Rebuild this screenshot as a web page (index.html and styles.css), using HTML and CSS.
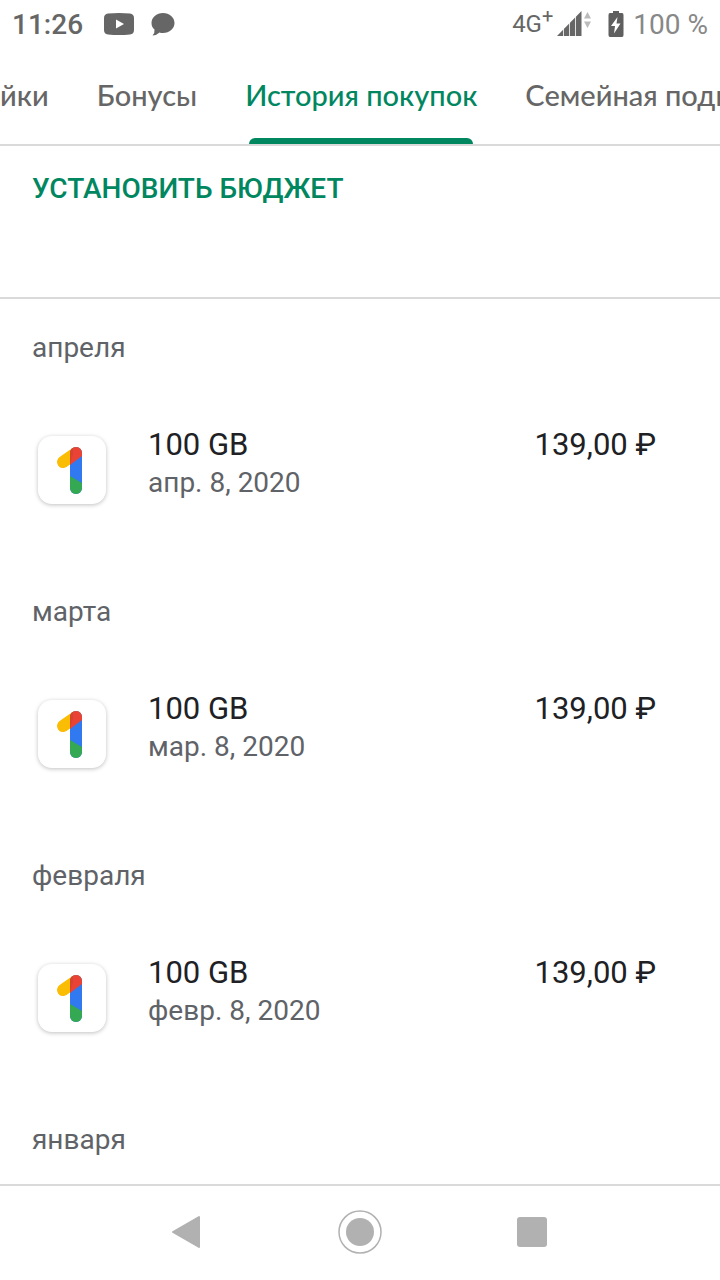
FILE: index.html
```html
<!DOCTYPE html>
<html lang="ru">
<head>
	<meta charset="utf-8">
	<title>История покупок</title>
	<meta name="viewport" content="width=device-width, initial-scale=1">
	<link rel="stylesheet" href="styles.css">
</head>
<body>
	<svg class="defs" width="0" height="0" aria-hidden="true">
		<defs>
			<clipPath id="stem"><rect x="32" y="11" width="12" height="47" rx="6"/></clipPath>
			<symbol id="one" viewBox="0 0 68 68">
				<path d="M25 26L38 17" fill="none" stroke="#fbbc04" stroke-width="12" stroke-linecap="round"/>
				<g clip-path="url(#stem)">
					<path d="M32 0H44V60H32z" fill="#3079f0"/>
					<path d="M32 0H44V20L32 29z" fill="#ea4335"/>
					<path d="M32 0H35V18L32 29z" fill="#d3452c"/>
					<path d="M32 40L44 47V60H32z" fill="#34a853"/>
				</g>
			</symbol>
		</defs>
	</svg>

	<header class="status">
		<span class="clock">11:26</span>
		<svg class="youtube" width="30" height="22" viewBox="0 0 30 22"><path fill="#666" fill-rule="evenodd" d="M4 .5Q15-.5 26 .5Q30 1 30 5V17Q30 21 26 21.500Q15 22.500 4 21.500Q0 21 0 17V5Q0 1 4 .5zM12 6.500V15.500L20 11z"/></svg>
		<svg class="chat" width="24" height="24" viewBox="0 0 24 24"><path fill="#666" d="M12 1C18.500 1 23.500 5.500 23.500 11S18.500 21 12 21Q10 21 8.500 20.500Q5.500 23.500 1.500 23.500Q4 21 3.500 17.500Q.5 15 .5 11C.5 5.500 5.500 1 12 1z"/></svg>
		<span class="network">4G<sup>+</sup></span>
		<svg class="signal" width="34" height="26" viewBox="0 0 34 26">
			<path fill="#666" d="M0 25L24.500 0V25z"/>
			<path stroke="#fff" stroke-width=".8" d="M6.500 10V25M12.500 8V25M18.500 4V25"/>
			<path fill="#bbb" d="M30.500 1L34 7.500H27zM27 10.500H34L30.500 17z"/>
		</svg>
		<svg class="battery" width="16" height="26" viewBox="0 0 16 26"><path fill="#5f5f5f" fill-rule="evenodd" d="M5 0H11V2H14Q15.500 2 15.500 4V24Q15.500 26 14 26H2Q.5 26 .5 24V4Q.5 2 2 2H5zM9.500 6L3 15H7L6 22.500L12.500 12.500H8.500z"/></svg>
		<span class="percent">100 %</span>
	</header>

	<nav class="tabs">
		<a href="#">йки</a>
		<a href="#">Бонусы</a>
		<a href="#" class="active">История покупок</a>
		<a href="#">Семейная подп</a>
	</nav>

	<main>
		<section class="budget">
			<button>УСТАНОВИТЬ БЮДЖЕТ</button>
		</section>

		<section class="month">
			<h2>апреля</h2>
			<article class="purchase">
				<svg class="logo"><use href="#one"/></svg>
				<div class="info">
					<h3>100 GB</h3>
					<p>апр. 8, 2020</p>
				</div>
				<span class="price">139,00 ₽</span>
			</article>
		</section>

		<section class="month">
			<h2>марта</h2>
			<article class="purchase">
				<svg class="logo"><use href="#one"/></svg>
				<div class="info">
					<h3>100 GB</h3>
					<p>мар. 8, 2020</p>
				</div>
				<span class="price">139,00 ₽</span>
			</article>
		</section>

		<section class="month">
			<h2>февраля</h2>
			<article class="purchase">
				<svg class="logo"><use href="#one"/></svg>
				<div class="info">
					<h3>100 GB</h3>
					<p>февр. 8, 2020</p>
				</div>
				<span class="price">139,00 ₽</span>
			</article>
		</section>

		<section class="month">
			<h2>января</h2>
		</section>
	</main>

	<footer class="navbar">
		<button aria-label="Назад">
			<svg width="44" height="44" viewBox="0 0 44 44"><path fill="#b1b1b1" stroke="#b1b1b1" stroke-width="2" stroke-linejoin="round" d="M7 22L33 7V37z"/></svg>
		</button>
		<button aria-label="Домой">
			<svg width="44" height="44" viewBox="0 0 44 44"><circle cx="22" cy="22" r="21" fill="none" stroke="#b1b1b1" stroke-width="1.500"/><circle cx="22" cy="22" r="14" fill="#b1b1b1"/></svg>
		</button>
		<button aria-label="Недавние">
			<svg width="44" height="44" viewBox="0 0 44 44"><rect x="7" y="7" width="30" height="30" rx="3" fill="#b1b1b1"/></svg>
		</button>
	</footer>
</body>
</html>
```
FILE: styles.css
```css
body {
    font-family: Roboto, sans-serif;
    height: 100vh;
    margin: 0;
    display: flex;
    flex-direction: column;
    background-color: #fff;
    color: #202124;
}
h2, h3, p {
    margin: 0;
    font-weight: 400;
}
button {
    border: none;
    background: none;
    padding: 0;
    font-family: inherit;
    cursor: pointer;
}
svg {
    display: block;
    flex: none;
}
.defs {
    position: absolute;
}

.status {
    display: flex;
    align-items: center;
    height: 48px;
    padding: 0 12px;
    box-sizing: border-box;
    flex: none;
    color: #666;
    font-size: 28px;
    white-space: nowrap;
}
.clock {
    font-weight: 500;
}
.youtube {
    margin-left: 21px;
}
.chat {
    margin-left: 17px;
}
.network {
    margin-left: auto;
    font-size: 24px;
}
.network sup {
    font-size: 20px;
    line-height: 0;
}
.signal {
    margin-left: 4px;
}
.battery {
    margin-left: 17px;
}
.percent {
    margin-left: 9px;
    color: #888;
}

.tabs {
    display: flex;
    justify-content: flex-start;
    gap: 48px;
    height: 96px;
    flex: none;
    overflow: hidden;
    border-bottom: 2px solid #dadada;
}
.tabs a {
    display: flex;
    flex-direction: column;
    flex: none;
    color: #666;
    font-family: Lato, Roboto, sans-serif;
    font-size: 29px;
    font-weight: 500;
    line-height: 94px;
    text-decoration: none;
    white-space: nowrap;
}
.tabs .active {
    color: #01875f;
}
.tabs .active::after {
    content: "";
    height: 6px;
    margin: -4px 4px 0;
    border-radius: 6px 6px 0 0;
    background-color: #01875f;
}

main {
    flex: 1;
    min-height: 0;
    overflow: hidden;
}
.budget {
    height: 153px;
    padding: 24px 32px;
    box-sizing: border-box;
    border-bottom: 2px solid #dadada;
}
.budget button {
    color: #01875f;
    font-size: 28px;
    font-weight: 500;
    line-height: 38px;
}
.month {
    padding: 31px 64px 59px 32px;
}
.month h2 {
    color: #5f6368;
    font-size: 28px;
    line-height: 36px;
}
.purchase {
    display: flex;
    align-items: flex-start;
    margin-top: 60px;
}
.logo {
    width: 68px;
    height: 68px;
    margin: 10px 42px 0 6px;
    border-radius: 14px;
    box-shadow: 0 1px 4px rgba(0, 0, 0, 0.25);
}
.info {
    flex: 1;
}
.info h3, .price {
    font-size: 31px;
    line-height: 38px;
}
.info p {
    color: #5f6368;
    font-size: 28px;
    line-height: 38px;
}

.navbar {
    display: flex;
    justify-content: center;
    align-items: center;
    gap: 128px;
    height: 92px;
    padding-bottom: 2px;
    flex: none;
    border-top: 2px solid #dadada;
}
```
